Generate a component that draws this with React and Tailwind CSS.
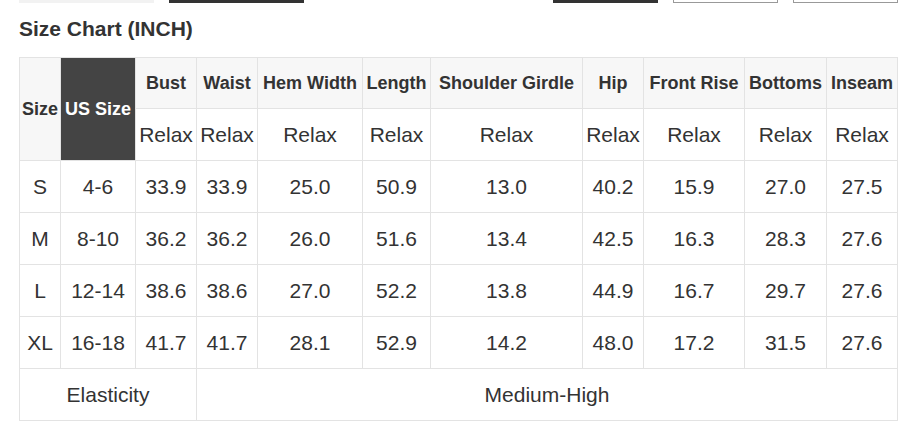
import React from 'react';

const headers = ['Bust', 'Waist', 'Hem Width', 'Length', 'Shoulder Girdle', 'Hip', 'Front Rise', 'Bottoms', 'Inseam'];
const widths = [41, 75, 61, 61, 105, 68, 152, 61, 101, 82, 71];

const rows = [
  ['S', '4-6', '33.9', '33.9', '25.0', '50.9', '13.0', '40.2', '15.9', '27.0', '27.5'],
  ['M', '8-10', '36.2', '36.2', '26.0', '51.6', '13.4', '42.5', '16.3', '28.3', '27.6'],
  ['L', '12-14', '38.6', '38.6', '27.0', '52.2', '13.8', '44.9', '16.7', '29.7', '27.6'],
  ['XL', '16-18', '41.7', '41.7', '28.1', '52.9', '14.2', '48.0', '17.2', '31.5', '27.6'],
];

const cell = 'border border-[#e3e3e3] text-center align-middle whitespace-nowrap p-0';

const App = () => {
  return (
    <div className="w-[917px] h-[438px] bg-white text-[#333] font-['Liberation_Sans',Arial,sans-serif] overflow-hidden">
      {/* bottoms of the buttons above, cut off by the viewport */}
      <div className="flex h-[3px] pl-[19px] pr-[19px]">
        <div className="w-[135px] bg-[#f2f2f2]"></div>
        <div className="w-[135px] ml-[15px] bg-[#333]"></div>
        <div className="flex-1"></div>
        <div className="w-[105px] bg-[#333]"></div>
        <div className="w-[105px] ml-[15px] border border-t-0 border-[#999]"></div>
        <div className="w-[105px] ml-[15px] border border-t-0 border-[#999]"></div>
      </div>

      <div className="px-[19px]">
        <h2 className="mt-[14px] mb-[16px] text-[21px] leading-[24px] font-bold">Size Chart (INCH)</h2>

        <table className="table-fixed border-collapse w-[879px]">
          <colgroup>
            {widths.map((w, i) => (
              <col key={i} style={{ width: w }} />
            ))}
          </colgroup>
          <tbody>
            <tr className="h-[51px] bg-[#f7f7f7]">
              <th rowSpan={2} className={`${cell} text-[18px] font-bold`}>Size</th>
              <th rowSpan={2} className={`${cell} text-[18px] font-bold bg-[#444] text-white`}>US Size</th>
              {headers.map((h) => (
                <th key={h} className={`${cell} text-[18px] font-bold`}>{h}</th>
              ))}
            </tr>
            <tr className="h-[52px]">
              {headers.map((h) => (
                <td key={h} className={`${cell} text-[21px] bg-white`}>Relax</td>
              ))}
            </tr>
            {rows.map((r) => (
              <tr key={r[0]} className="h-[52px]">
                {r.map((v, i) => (
                  <td key={i} className={`${cell} text-[21px]`}>{v}</td>
                ))}
              </tr>
            ))}
            <tr className="h-[52px]">
              <td colSpan={3} className={`${cell} text-[21px]`}>Elasticity</td>
              <td colSpan={8} className={`${cell} text-[21px]`}>Medium-High</td>
            </tr>
          </tbody>
        </table>
      </div>
    </div>
  );
};

export default App;
